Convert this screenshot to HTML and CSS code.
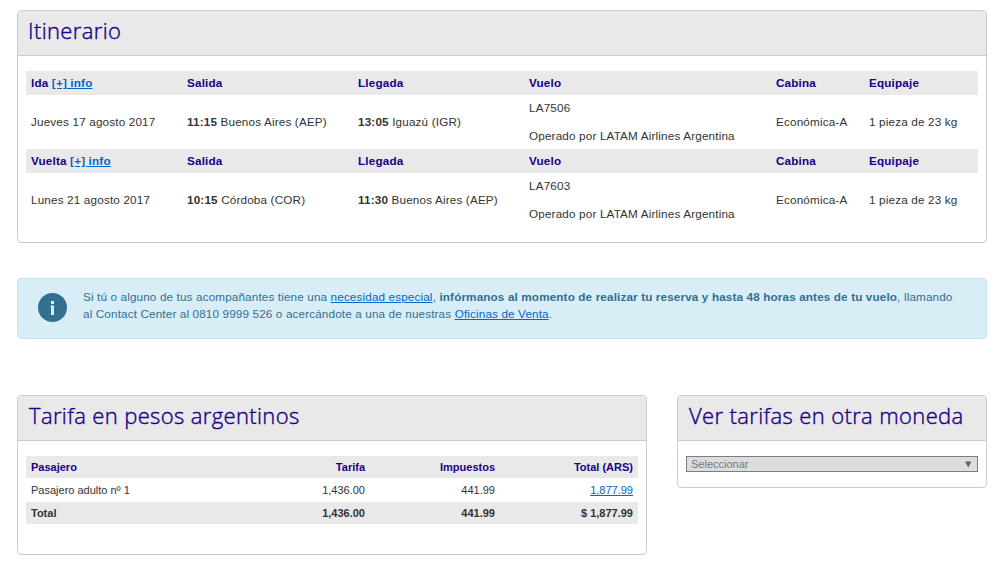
FILE: index.html
```html
<!DOCTYPE html>
<html lang="es">

<head>
  <meta charset="UTF-8">
  <meta name="viewport" content="width=device-width, initial-scale=1.0">
  <title>Itinerario</title>
  <link rel="stylesheet" href="styles.css">
</head>

<body>
  <div class="page">
    <section class="panel itinerary">
      <h2 class="panel-title">Itinerario</h2>
      <div class="panel-body">
        <table class="flights">
          <colgroup>
            <col class="col-date">
            <col class="col-from">
            <col class="col-to">
            <col class="col-flight">
            <col class="col-cabin">
            <col class="col-bags">
          </colgroup>
          <tbody>
            <tr>
              <th>Ida <a href="#">[+] info</a></th>
              <th>Salida</th>
              <th>Llegada</th>
              <th>Vuelo</th>
              <th>Cabina</th>
              <th>Equipaje</th>
            </tr>
            <tr>
              <td>Jueves 17 agosto 2017</td>
              <td><strong>11:15</strong> Buenos Aires (AEP)</td>
              <td><strong>13:05</strong> Iguazú (IGR)</td>
              <td>LA7506<br><br>Operado por LATAM Airlines Argentina</td>
              <td>Económica-A</td>
              <td>1 pieza de 23 kg</td>
            </tr>
            <tr>
              <th>Vuelta <a href="#">[+] info</a></th>
              <th>Salida</th>
              <th>Llegada</th>
              <th>Vuelo</th>
              <th>Cabina</th>
              <th>Equipaje</th>
            </tr>
            <tr>
              <td>Lunes 21 agosto 2017</td>
              <td><strong>10:15</strong> Córdoba (COR)</td>
              <td><strong>11:30</strong> Buenos Aires (AEP)</td>
              <td>LA7603<br><br>Operado por LATAM Airlines Argentina</td>
              <td>Económica-A</td>
              <td>1 pieza de 23 kg</td>
            </tr>
          </tbody>
        </table>
      </div>
    </section>

    <div class="notice">
      <svg class="notice-icon" width="29" height="29" viewBox="0 0 29 29">
        <circle cx="14.5" cy="14.5" r="14.5" fill="#31708f" />
        <path d="M13 8h3v3h-3zM12.500 12.500h3.500v9.500h-3v-8.500h-.5z" fill="#d9edf7" />
      </svg>
      <p class="notice-text">Si tú o alguno de tus acompañantes tiene una <a href="#">necesidad especial</a>, <strong>infórmanos al momento de realizar tu reserva y hasta 48 horas antes de tu vuelo</strong>, llamando<br>al Contact Center al 0810 9999 526 o acercándote a una de nuestras <a href="#">Oficinas de Venta</a>.</p>
    </div>

    <div class="fares-row">
      <section class="panel fares">
        <h2 class="panel-title">Tarifa en pesos argentinos</h2>
        <div class="panel-body">
          <table class="prices">
            <colgroup>
              <col class="col-passenger">
              <col class="col-fare">
              <col class="col-taxes">
              <col class="col-total">
            </colgroup>
            <thead>
              <tr>
                <th>Pasajero</th>
                <th>Tarifa</th>
                <th>Impuestos</th>
                <th>Total (ARS)</th>
              </tr>
            </thead>
            <tbody>
              <tr>
                <td>Pasajero adulto nº 1</td>
                <td>1,436.00</td>
                <td>441.99</td>
                <td><a href="#">1,877.99</a></td>
              </tr>
            </tbody>
            <tfoot>
              <tr>
                <td>Total</td>
                <td>1,436.00</td>
                <td>441.99</td>
                <td>$ 1,877.99</td>
              </tr>
            </tfoot>
          </table>
        </div>
      </section>

      <section class="panel currency">
        <h2 class="panel-title">Ver tarifas en otra moneda</h2>
        <div class="panel-body">
          <div class="currency-select">
            <span>Seleccionar</span>
            <svg width="8" height="7" viewBox="0 0 8 7">
              <path d="M1 0.500h6.500L4.250 6.500z" fill="#666" />
            </svg>
          </div>
        </div>
      </section>
    </div>
  </div>
</body>

</html>
```
FILE: styles.css
```css
body {
  margin: 0;
  background-color: #fff;
  color: #333;
  font-family: "Liberation Sans", Arial, sans-serif;
  font-size: 11.7px;
  letter-spacing: 0.145px;
  line-height: 14px;
}

a {
  color: #0066cc;
  text-decoration: underline;
}

.page {
  width: 970px;
  padding: 10px 0 0 17px;
}

.panel {
  box-sizing: border-box;
  border: 1px solid #ccc;
  border-radius: 4px;
  background-color: #fff;
  overflow: hidden;
}

.panel-title {
  box-sizing: border-box;
  height: 45px;
  margin: 0;
  padding: 0 11px;
  border-bottom: 1px solid #ccc;
  background-color: #e9e9e9;
  color: #1b0088;
  font-family: "Open Sans", sans-serif;
  font-size: 22px;
  font-weight: 300;
  letter-spacing: 0.37px;
  line-height: 39px;
  white-space: nowrap;
  -webkit-text-stroke: 0.4px #1b0088;
}

.itinerary .panel-title {
  padding-left: 10px;
}

.panel-body {
  padding: 15px 8px;
}

table {
  width: 100%;
  border-collapse: collapse;
  table-layout: fixed;
}

th {
  background-color: #e9e9e9;
  color: #1b0088;
  text-align: left;
}

/* itinerary */
.flights {
  letter-spacing: 0.17px;
}

.flights th {
  padding: 5px;
}

.flights td {
  padding: 6px 5px;
  white-space: nowrap;
}

.col-date {
  width: 156px;
}

.col-from,
.col-to {
  width: 171px;
}

.col-flight {
  width: 247px;
}

.col-cabin {
  width: 93px;
}

/* special needs notice */
.notice {
  box-sizing: border-box;
  display: flex;
  height: 61px;
  margin-top: 35px;
  padding: 9px 20px;
  border: 1px solid #bce8f1;
  border-radius: 4px;
  background-color: #d9edf7;
  color: #31708f;
}

.notice-icon {
  flex: none;
  margin: 5px 16px 0 0;
}

.notice-text {
  margin: 0;
  line-height: 17px;
  white-space: nowrap;
}

/* fares */
.fares-row {
  display: flex;
  justify-content: space-between;
  align-items: flex-start;
  margin-top: 56px;
}

.fares {
  width: 630px;
  height: 160px;
}

.prices {
  font-size: 11px;
  letter-spacing: 0;
}

.prices th,
.prices td {
  padding: 4px 5px;
  text-align: right;
}

.prices tbody td {
  padding: 5px;
}

.prices th:first-child,
.prices td:first-child {
  text-align: left;
}

.prices tfoot td {
  background-color: #e9e9e9;
  font-weight: bold;
}

.col-passenger {
  width: 214px;
}

.col-fare,
.col-taxes {
  width: 130px;
}

.currency {
  width: 310px;
}

.currency-select {
  box-sizing: border-box;
  display: flex;
  justify-content: space-between;
  align-items: center;
  height: 16px;
  padding: 0 5px 0 4px;
  border: 1px solid #708090;
  background-color: #ddd;
  color: #777;
  font-size: 11px;
  letter-spacing: 0;
}
```
